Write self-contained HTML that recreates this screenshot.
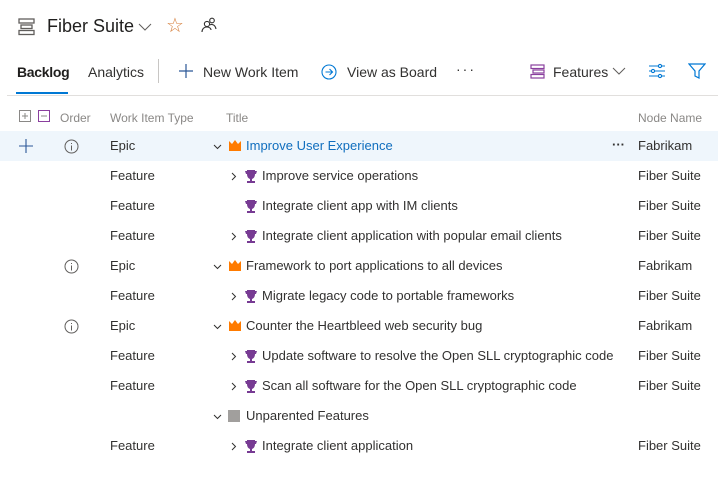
<!DOCTYPE html><html><head><style>
body{margin:0;width:718px;height:481px;background:#fff;font-family:"Liberation Sans",sans-serif;color:#323130;position:relative;overflow:hidden}
.a{position:absolute;white-space:nowrap}
.t{font-size:13px}
.h{font-size:12px;color:#8a8886}
</style></head><body>
<svg class="a" style="left:18px;top:18px" width="18" height="18" viewBox="0 0 18 18" fill="none" stroke="#605e5c" stroke-width="1.3"><rect x="1" y="1" width="15" height="4"/><rect x="3" y="7" width="11" height="3.5"/><rect x="1" y="12.5" width="15" height="4"/></svg>
<div class="a" style="left:47px;top:16px;font-size:18px;color:#201f1e">Fiber Suite</div>
<svg class="a" style="left:138px;top:22px" width="14" height="10"><path d="M1 2l6 6 6-6" stroke="#605e5c" fill="none"/></svg>
<div class="a" style="left:166px;top:13px;font-size:20px;color:#d67f3c">☆</div>
<svg class="a" style="left:200px;top:16px" width="18" height="18" fill="none" stroke="#323130" stroke-width="1.1"><circle cx="7" cy="8" r="2.6"/><path d="M2 16c0-3 2-5 5-5s4 2 4 3"/><circle cx="12" cy="4.5" r="2.3"/><path d="M10 9c1-1 5-1 6 4"/></svg>
<div class="a" style="left:17px;top:64px;font-size:14px;font-weight:bold;color:#201f1e;letter-spacing:-0.3px">Backlog</div>
<div class="a" style="left:16px;top:92px;width:52px;height:2px;background:#0078d4"></div>
<div class="a" style="left:88px;top:64px;font-size:14px">Analytics</div>
<div class="a" style="left:158px;top:59px;width:1px;height:24px;background:#c8c6c4"></div>
<svg class="a" style="left:178px;top:63px" width="16" height="16" stroke="#2b5797" stroke-width="1.2"><path d="M8 1v14M1 8h14"/></svg>
<div class="a" style="left:203px;top:64px;font-size:14px">New Work Item</div>
<svg class="a" style="left:321px;top:64px" width="16" height="16" fill="none" stroke="#0078d4" stroke-width="1.1"><circle cx="8" cy="8" r="7"/><path d="M4.5 8h7M8.5 5l3 3-3 3"/></svg>
<div class="a" style="left:347px;top:64px;font-size:14px">View as Board</div>
<div class="a" style="left:456px;top:61px;font-size:14px;letter-spacing:2px">···</div>
<svg class="a" style="left:530px;top:64px" width="16" height="15" fill="none" stroke="#8a3f9e" stroke-width="1.2"><rect x="1" y="1" width="13" height="3.5"/><rect x="3" y="6" width="11" height="3"/><rect x="1" y="10.5" width="13" height="3.5"/></svg>
<div class="a" style="left:553px;top:64px;font-size:14px">Features</div>
<svg class="a" style="left:612px;top:67px" width="14" height="9"><path d="M1 1l6 6 6-6" stroke="#605e5c" fill="none"/></svg>
<svg class="a" style="left:648px;top:63px" width="18" height="16" fill="none" stroke="#0078d4" stroke-width="1.1"><path d="M1 3h16M1 8h16M1 13h16"/><circle cx="12" cy="3" r="1.6" fill="#fff"/><circle cx="5" cy="8" r="1.6" fill="#fff"/><circle cx="12" cy="13" r="1.6" fill="#fff"/></svg>
<svg class="a" style="left:688px;top:63px" width="18" height="17" fill="none" stroke="#0078d4" stroke-width="1.2"><path d="M1 1h16l-6 7v7l-4-2V8z"/></svg>
<div class="a" style="left:7px;top:95px;width:711px;height:1px;background:#e1dfdd"></div>
<svg class="a" style="left:19px;top:110px" width="34" height="13" fill="none" stroke="#8a8886"><rect x=".5" y=".5" width="11" height="11"/><path d="M3 6h6M6 3v6"/><rect x="19.5" y=".5" width="11" height="11" stroke="#8a3f9e"/><path d="M22 6h6"/></svg>
<div class="a h" style="left:60px;top:111px">Order</div>
<div class="a h" style="left:110px;top:111px">Work Item Type</div>
<div class="a h" style="left:226px;top:111px">Title</div>
<div class="a h" style="left:638px;top:111px">Node Name</div>
<div class="a" style="left:0;top:131px;width:718px;height:30px;background:#eff6fc"></div>
<svg class="a" style="left:19px;top:139px" width="14" height="14" stroke="#2b5797" stroke-width="1.1"><path d="M7 0v14M0 7h14"/></svg>
<div class="a" style="left:612px;top:137px;font-size:13px;font-weight:bold">···</div>
<div id="rows"></div>
<script>
var R=[
["i","Epic",0,1,"Improve User Experience","Fabrikam",1],
["","Feature",1,1,"Improve service operations","Fiber Suite"],
["","Feature",1,0,"Integrate client app with IM clients","Fiber Suite"],
["","Feature",1,1,"Integrate client application with popular email clients","Fiber Suite"],
["i","Epic",0,1,"Framework to port applications to all devices","Fabrikam"],
["","Feature",1,1,"Migrate legacy code to portable frameworks","Fiber Suite"],
["i","Epic",0,1,"Counter the Heartbleed web security bug","Fabrikam"],
["","Feature",1,1,"Update software to resolve the Open SLL cryptographic code","Fiber Suite"],
["","Feature",1,1,"Scan all software for the Open SLL cryptographic code","Fiber Suite"],
["","",2,1,"Unparented Features",""],
["","Feature",1,1,"Integrate client application","Fiber Suite"]];
var h="";
R.forEach(function(r,i){var y=138+i*30;
if(r[0])h+='<svg class="a" style="left:64px;top:'+(y+1)+'px" width="15" height="15" fill="none" stroke="#605e5c"><circle cx="7.5" cy="7.5" r="6.5"/><path d="M7.5 6.5v5M7.5 4v1"/></svg>';
h+='<div class="a t" style="left:110px;top:'+y+'px">'+r[1]+'</div>';
var cx=r[2]==1?230:213, ix=r[2]==1?244:228, tx=r[2]==1?262:246;
if(r[3])h+=r[2]==1?'<svg class="a" style="left:'+cx+'px;top:'+(y+4)+'px" width="8" height="9"><path d="M2 1l3.5 3.5L2 8" stroke="#323130" fill="none"/></svg>':'<svg class="a" style="left:'+cx+'px;top:'+(y+5)+'px" width="9" height="8"><path d="M1 2l3.5 3.5L8 2" stroke="#323130" fill="none"/></svg>';
if(r[2]==1)h+='<svg class="a" style="left:'+ix+'px;top:'+(y+1)+'px" width="14" height="15" fill="#773b93"><path d="M3 1h8v4c0 3-1.5 4.5-3 5v2h3v2H3v-2h3v-2C4.5 9.5 3 8 3 5z"/><path d="M1 2h2v3H2zM11 2h2l-1 3h-1z"/></svg>';
else if(r[2]==0)h+='<svg class="a" style="left:'+ix+'px;top:'+(y+1)+'px" width="14" height="13" fill="#ff7b00"><path d="M1 2l3 3 3-4 3 4 3-3v10H1z"/></svg>';
else h+='<div class="a" style="left:'+ix+'px;top:'+(y+2)+'px;width:12px;height:12px;background:#a19f9d"></div>';
h+='<div class="a t" style="left:'+tx+'px;top:'+y+'px;color:'+(r[6]?'#106ebe':'#323130')+'">'+r[4]+'</div>';
h+='<div class="a t" style="left:638px;top:'+y+'px">'+r[5]+'</div>';});
document.getElementById("rows").innerHTML=h;
</script>
</body></html>
